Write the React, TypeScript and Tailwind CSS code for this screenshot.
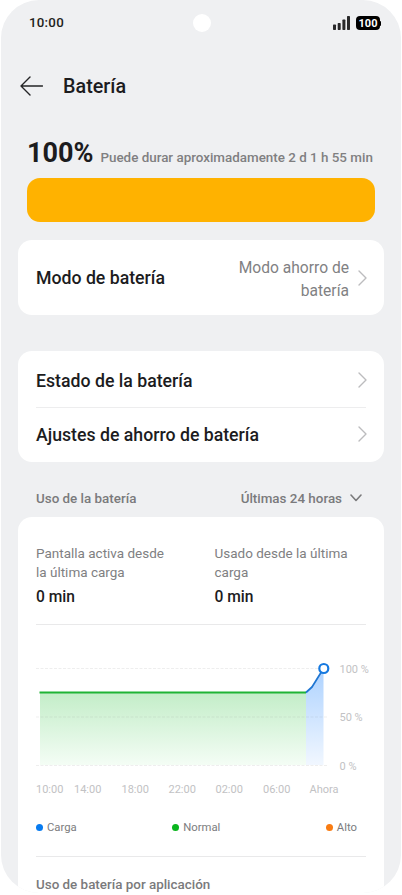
import type { ReactNode } from 'react';

const hours = [
  { label: '10:00', x: 0 },
  { label: '14:00', x: 38 },
  { label: '18:00', x: 85.5 },
  { label: '22:00', x: 132.5 },
  { label: '02:00', x: 179.5 },
  { label: '06:00', x: 227 },
  { label: 'Ahora', x: 273.5 },
];

const levels = [
  { label: '100 %', y: 12.5 },
  { label: '50 %', y: 61 },
  { label: '0 %', y: 109.5 },
];

function ChevronRight() {
  return (
    <svg className="h-4 w-[9px] shrink-0" viewBox="0 0 9 16" fill="none" stroke="#bcbcbe" strokeWidth={1.4}>
      <path strokeLinecap="round" strokeLinejoin="round" d="M1 1l7 7-7 7" />
    </svg>
  );
}

function StatusBar() {
  return (
    <div className="grid h-[46px] shrink-0 grid-cols-3 items-center pr-[20px] pl-[28px]">
      <span className="text-[13.3px] font-medium tracking-[0.25px] text-[#1f1f20]">10:00</span>
      <span className="ml-[-5px] h-[18px] w-[18px] justify-self-center rounded-full bg-white" />
      <div className="flex items-center justify-end gap-[6px]">
        <svg className="h-[14px] w-[17px]" viewBox="0 0 17 14" fill="#29292a">
          <rect x="0" y="8.5" width="3" height="5.5" rx="0.7" />
          <rect x="4.7" y="7" width="3" height="7" rx="0.7" />
          <rect x="9.4" y="3.5" width="3" height="10.5" rx="0.7" />
          <rect x="14" y="0" width="3" height="14" rx="0.7" />
        </svg>
        <div className="flex items-center">
          <span className="flex h-[14px] w-6 items-center justify-center rounded-[4px] bg-black pt-px text-[11px] leading-3 font-bold text-white">
            100
          </span>
          <span className="h-[5px] w-px rounded-r-sm bg-black" />
        </div>
      </div>
    </div>
  );
}

function Row({ title, className = '', children }: { title: string; className?: string; children?: ReactNode }) {
  return (
    <div className={`-mr-px flex items-center justify-between ${className}`}>
      <span className="pt-[2px] text-[17.7px] font-medium text-[#1c1c1e]">{title}</span>
      <div className="flex items-center gap-[9px]">
        {children}
        <ChevronRight />
      </div>
    </div>
  );
}

function Stat({ title, value }: { title: string; value: string }) {
  return (
    <div>
      <p className="w-[140px] text-[13.5px] leading-[18.7px] text-[#808082]">{title}</p>
      <p className="mt-[6px] text-[15.6px] leading-5 font-medium text-[#1c1c1e]">{value}</p>
    </div>
  );
}

function Legend({ color, label }: { color: string; label: string }) {
  return (
    <div className="flex items-center gap-1">
      <span className={`mb-[2px] h-[7px] w-[7px] rounded-full ${color}`} />
      <span className="text-[11.3px] text-[#7c7c7e]">{label}</span>
    </div>
  );
}

function UsageChart() {
  return (
    <svg className="h-[150px] w-[340px]" viewBox="0 0 340 150">
      <defs>
        <linearGradient id="normal" x1="0" y1="0" x2="0" y2="1">
          <stop offset="0" stopColor="#c3edc8" />
          <stop offset="1" stopColor="#f4fdf5" />
        </linearGradient>
        <linearGradient id="charge" x1="0" y1="0" x2="0" y2="1">
          <stop offset="0" stopColor="#add2ff" />
          <stop offset="1" stopColor="#f1f7ff" />
        </linearGradient>
      </defs>
      <path d="M4 36.5H270V109H4Z" fill="url(#normal)" />
      <path d="M270 36.5L276 31L287.5 12.5V109H270Z" fill="url(#charge)" />
      {levels.map((level) => (
        <g key={level.label}>
          <path d={`M0 ${level.y}H291`} stroke="#777" strokeOpacity={0.12} strokeDasharray="3 1.5" />
          <text x="303.5" y={level.y + 4.4} fontSize="11" fill="#c2c2c4">
            {level.label}
          </text>
        </g>
      ))}
      <path d="M3.5 36.5H270" stroke="#1fb435" strokeWidth={1.8} />
      <path d="M270 36.5L276 31L287.5 12.5" fill="none" stroke="#2076d2" strokeWidth={1.7} strokeLinejoin="round" />
      <circle cx="287.8" cy="12.5" r="4.5" fill="#fff" stroke="#1679e0" strokeWidth={2.2} />
      {hours.map((hour) => (
        <text key={hour.label} x={hour.x} y="137" fontSize="11" fill="#c2c2c4">
          {hour.label}
        </text>
      ))}
    </svg>
  );
}

export default function App() {
  return (
    <div className="h-[895px] overflow-hidden bg-white px-px font-[Roboto,sans-serif]">
      <div className="flex h-[893px] flex-col overflow-hidden rounded-[38px] bg-[#eff0f2]">
        <StatusBar />

        {/* Header */}
        <header className="flex h-[80px] shrink-0 items-center gap-[20px] pl-[19px]">
          <svg className="h-5 w-[23px]" viewBox="0 0 23 20" fill="none" stroke="#252527" strokeWidth={1.4}>
            <path strokeLinecap="round" strokeLinejoin="round" d="M10 1L1 10l9 9M1 10h21.5" />
          </svg>
          <h1 className="pt-[2px] text-[19.8px] font-medium text-[#1c1c1e]">Batería</h1>
        </header>

        {/* Battery level */}
        <section className="shrink-0 px-[26px]">
          <div className="flex h-[51.5px] items-baseline gap-[7px] pt-[9px]">
            <span className="text-[27px] leading-9 font-bold text-[#1c1c1e]">100%</span>
            <span className="text-[13.4px] font-medium whitespace-nowrap text-[#7f7f81]">
              Puede durar aproximadamente 2 d 1 h 55 min
            </span>
          </div>
          <div className="h-[44.5px] rounded-[13px] bg-[#ffb200]" />
        </section>

        {/* Settings */}
        <section className="mx-[17px] mt-[18px] shrink-0 rounded-[14px] bg-white px-[18px]">
          <Row title="Modo de batería" className="h-[75px]">
            <span className="w-[120px] pt-[4px] text-right text-[15.6px] leading-[23px] text-[#818183]">
              Modo ahorro de batería
            </span>
          </Row>
        </section>
        <section className="mx-[17px] mt-9 h-[111px] shrink-0 rounded-[14px] bg-white px-[18px] pt-[2px]">
          <Row title="Estado de la batería" className="h-[54px]" />
          <div className="h-px bg-[#ededee]" />
          <Row title="Ajustes de ahorro de batería" className="h-[52px]" />
        </section>

        {/* Usage */}
        <div className="flex h-[55px] shrink-0 items-center justify-between pt-[20px] pr-[39px] pl-[35px] text-[13.4px] font-medium text-[#7a7a7c]">
          <span>Uso de la batería</span>
          <div className="flex items-center gap-[8px]">
            <span>Últimas 24 horas</span>
            <svg className="mb-[2px] h-2 w-3" viewBox="0 0 12 8" fill="none" stroke="currentColor" strokeWidth={1.6}>
              <path strokeLinecap="round" strokeLinejoin="round" d="M1 1l5 5.5L11 1" />
            </svg>
          </div>
        </div>
        <section className="mx-[17px] flex-1 rounded-t-[14px] bg-white px-[18px] pt-[27px]">
          <div className="grid h-[80px] grid-cols-[178.5px_1fr]">
            <Stat title="Pantalla activa desde la última carga" value="0 min" />
            <Stat title="Usado desde la última carga" value="0 min" />
          </div>
          <div className="mb-[31px] h-px bg-[#e9e9ea]" />
          <UsageChart />
          <div className="flex h-[44px] items-center justify-between pr-[9px]">
            <Legend color="bg-[#087bf0]" label="Carga" />
            <div className="mr-[10px]">
              <Legend color="bg-[#0ab51e]" label="Normal" />
            </div>
            <Legend color="bg-[#f97c12]" label="Alto" />
          </div>
          <div className="mt-[6px] h-px bg-[#e9e9ea]" />
          <h2 className="mt-[18px] text-[13.4px] leading-5 font-medium text-[#7a7a7c]">Uso de batería por aplicación</h2>
        </section>
      </div>
    </div>
  );
}
